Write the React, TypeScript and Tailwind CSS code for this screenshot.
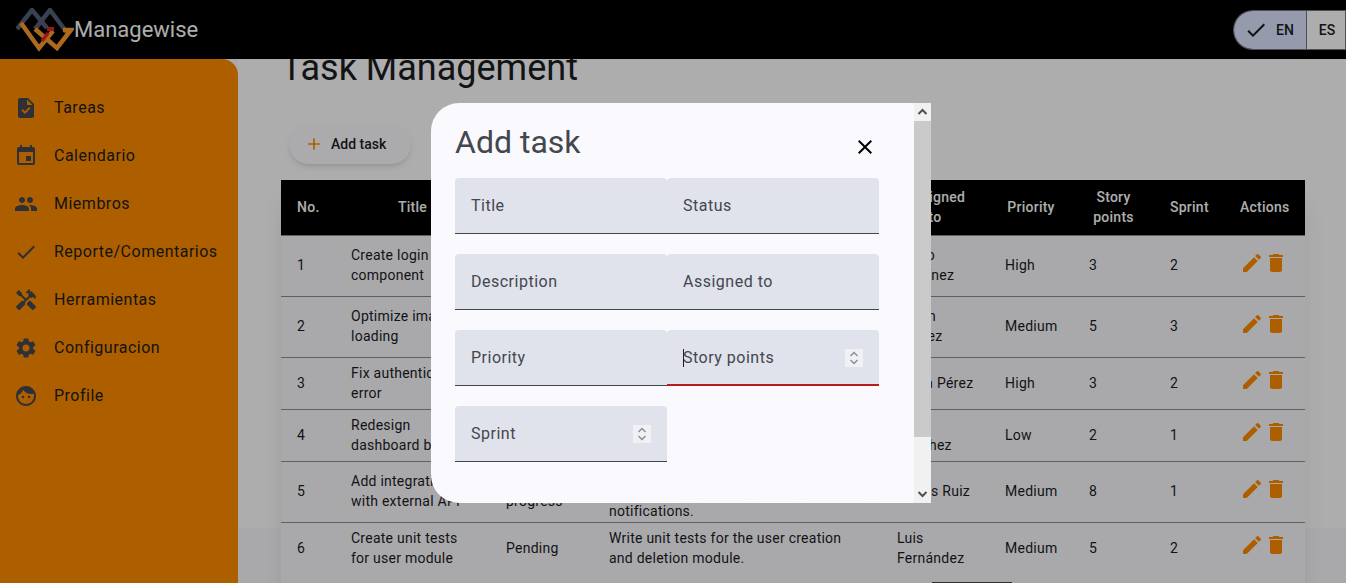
import React from "react";
import { MdTask, MdEvent, MdPeople, MdCheck, MdHandyman, MdSettings, MdFace, MdEdit, MdDelete, MdAdd, MdClose } from "react-icons/md";

const nav = [
  { label: "Tareas", Icon: MdTask },
  { label: "Calendario", Icon: MdEvent },
  { label: "Miembros", Icon: MdPeople },
  { label: "Reporte/Comentarios", Icon: MdCheck },
  { label: "Herramientas", Icon: MdHandyman },
  { label: "Configuracion", Icon: MdSettings },
  { label: "Profile", Icon: MdFace },
];

const rows = [
  ["1", "Create login component", "In progress", "Implement the login form with field validation and error messages for users.", "Pedro Martínez", "High", "3", "2"],
  ["2", "Optimize image loading", "Pending", "Reduce the loading time of the images on the main page using lazy loading techniques.", "Julián Gómez", "Medium", "5", "3"],
  ["3", "Fix authentication error", "Completed", "Solve the token expiration bug in the authentication flow.", "Laura Pérez", "High", "3", "2"],
  ["4", "Redesign dashboard based", "Pending", "Update the dashboard layout with the new visual style.", "Ana Sánchez", "Low", "2", "1"],
  ["5", "Add integration with external API", "In progress", "Connect the application with the external service to receive updates and notifications.", "Carlos Ruiz", "Medium", "8", "1"],
  ["6", "Create unit tests for user module", "Pending", "Write unit tests for the user creation and deletion module.", "Luis Fernández", "Medium", "5", "2"],
];

const tallRows = ["1", "2", "5"];

const heads = ["No.", "Title", "Status", "Description", "Assigned to", "Priority", "Story points", "Sprint", "Actions"];

function Logo() {
  return (
    <svg width="58" height="44" viewBox="0 0 58 44" fill="none" className="shrink-0">
      <polyline points="1,21 16,2 31,20" stroke="#556176" strokeWidth="4.5" />
      <polyline points="19,21 34,2 52,26" stroke="#556176" strokeWidth="4.5" />
      <polyline points="5,15 23,40 37,23" stroke="#ff9b2c" strokeWidth="4.5" />
      <polyline points="19,21 41,40 55,22 47,22" stroke="#ff9b2c" strokeWidth="4.5" />
      <polyline points="26,33 32,25" stroke="#e22626" strokeWidth="3.5" />
      <polyline points="31,21 38,21" stroke="#e22626" strokeWidth="4" />
    </svg>
  );
}

function Spinner() {
  return (
    <svg width="18" height="18" viewBox="0 0 18 18" fill="none" className="shrink-0 bg-[#f0f1f5]">
      <path d="M5.5 7 9 3.5 12.5 7M5.5 11 9 14.5 12.5 11" stroke="#8a8c92" strokeWidth="1.4" />
    </svg>
  );
}

function Field({ label, spinner, focused }: { label: string; spinner?: boolean; focused?: boolean }) {
  return (
    <div
      className={
        "relative flex h-14 items-center justify-between rounded-t pl-4 pr-4 bg-[#e0e2ec] text-base tracking-[0.5px] text-[#44474e] " +
        (focused ? "border-b-2 border-[#ba1a1a] pt-[1px]" : "border-b border-[#44474e]")
      }
    >
      <span>{label}</span>
      {focused && <span className="absolute left-4 top-[19px] h-[18px] w-px bg-[#1a1c1e]" />}
      {spinner && <Spinner />}
    </div>
  );
}

function ScrollArrow({ d }: { d: string }) {
  return (
    <svg width="17" height="18" viewBox="0 0 17 18" fill="none" className="shrink-0">
      <path d={d} stroke="#505050" strokeWidth="2" />
    </svg>
  );
}

export default function App() {
  return (
    <div className="relative flex h-[583px] w-[1346px] flex-col overflow-hidden bg-[#faf9fd] font-['Roboto',sans-serif] text-[#1a1c1e]">
      <header className="relative z-10 flex h-[59px] shrink-0 items-center justify-between bg-black pl-[16px]">
        <div className="flex items-center">
          <Logo />
          <span className="text-[22px] leading-7 text-white">Managewise</span>
        </div>
        <div className="flex h-10 w-[113px] overflow-hidden rounded-l-full rounded-r-[20px] border border-[#74777f] text-sm font-medium">
          <div className="flex w-[72px] items-center gap-[8px] bg-[#dce4ff] pl-[10px]">
            <MdCheck size={24} className="shrink-0" />
            <span>EN</span>
          </div>
          <div className="flex flex-1 items-center justify-center border-l border-[#74777f] bg-white pl-[2px]">ES</div>
        </div>
      </header>

      <div className="flex min-h-0 flex-1">
        <aside className="w-[238px] shrink-0 rounded-tr-2xl bg-[#ff8c00] pt-[25px]">
          {nav.map(({ label, Icon }) => (
            <div key={label} className="flex h-12 items-center gap-[16px] pl-[14px] text-base tracking-[0.5px]">
              <Icon size={24} className="shrink-0 text-[#44474e]" />
              <span>{label}</span>
            </div>
          ))}
        </aside>

        <main className="min-w-0 flex-1">
          <div className="h-[482px] bg-white pl-[43px]">
            <h1 className="-mt-[13px] text-[36px] leading-[44px] font-normal">Task Management</h1>
            <button className="mt-[34px] ml-2 flex h-10 w-[122px] items-center gap-[7px] rounded-full bg-[#fdfcff] pl-[15px] text-sm font-medium shadow-md">
              <MdAdd size={20} className="shrink-0 text-[#ff8c00]" />
              <span>Add task</span>
            </button>

            <div className="mt-4 w-[1024px] bg-[#faf9fd] shadow-xl">
              <table className="w-full table-fixed border-collapse text-sm leading-5 tracking-[0.25px]">
                <colgroup>
                  <col className="w-[54px]" />
                  <col className="w-[155px]" />
                  <col className="w-[103px]" />
                  <col className="w-[288px]" />
                  <col className="w-[108px]" />
                  <col className="w-[84px]" />
                  <col className="w-[81px]" />
                  <col className="w-[70px]" />
                  <col className="w-[81px]" />
                </colgroup>
                <thead>
                  <tr className="h-[55px] bg-black text-white">
                    {heads.map((h, i) => (
                      <th key={h} className={"border-b border-[#8a8d94] font-medium " + (i === 0 ? "pl-4 text-left" : "px-4 text-center")}>
                        {h}
                      </th>
                    ))}
                  </tr>
                </thead>
                <tbody>
                  {rows.map((r, ri) => {
                    const tall = tallRows.includes(r[0]);
                    return (
                      <tr key={r[0]} className={ri < rows.length - 1 ? "h-[52px] border-b border-[#8a8d94]" : "h-[52px]"}>
                        {r.map((c, i) => (
                          <td key={i} className={"px-4 py-0 align-middle " + (r[0] === "3" && i === 4 ? "whitespace-nowrap" : "")}>
                            <div className={tall ? "-translate-y-px" : ""}>{c}</div>
                          </td>
                        ))}
                        <td className="px-4 py-0 align-middle">
                          <div className="flex pb-[6px] text-[#ff8c00]">
                            <MdEdit size={24} className="shrink-0" />
                            <MdDelete size={24} className="shrink-0" />
                          </div>
                        </td>
                      </tr>
                    );
                  })}
                </tbody>
              </table>
              <div className="flex h-14 pt-[8px] pl-[651px]">
                <div className="h-12 w-20 border-t border-[#44474e]" />
              </div>
            </div>
          </div>
        </main>
      </div>

      <div className="absolute inset-0 z-20 bg-black/[0.32]" />

      <div className="absolute left-[431px] top-[103px] z-30 flex h-[400px] w-[500px] overflow-hidden rounded-l-[28px] bg-[#faf9fd]">
        <div className="min-w-0 flex-1 px-6">
          <div className="flex h-[75px] justify-between">
            <h2 className="pt-[19px] text-[32px] leading-10 font-normal text-[#44474e]">Add task</h2>
            <div className="mt-[32px] mr-[13px] h-6 w-6 text-black">
              <MdClose size={24} />
            </div>
          </div>
          <div className="grid w-[424px] grid-cols-2 gap-y-5">
            <Field label="Title" />
            <Field label="Status" />
            <Field label="Description" />
            <Field label="Assigned to" />
            <Field label="Priority" />
            <Field label="Story points" spinner focused />
            <Field label="Sprint" spinner />
          </div>
          <div className="mt-[37px] flex gap-[18px] pl-[225px]">
            <div className="h-10 w-[87px] shrink-0 rounded-full bg-[#faf9fd] shadow-sm" />
            <div className="h-10 w-[98px] shrink-0 rounded-full bg-[#faf9fd] shadow-sm" />
          </div>
        </div>
        <div className="flex w-[17px] shrink-0 flex-col bg-[#f1f1f1]">
          <ScrollArrow d="M4.5 11 8.5 7 12.5 11" />
          <div className="h-[316px] bg-[#cacaca]" />
          <div className="flex-1" />
          <ScrollArrow d="M4.5 7 8.5 11 12.5 7" />
        </div>
      </div>
    </div>
  );
}
